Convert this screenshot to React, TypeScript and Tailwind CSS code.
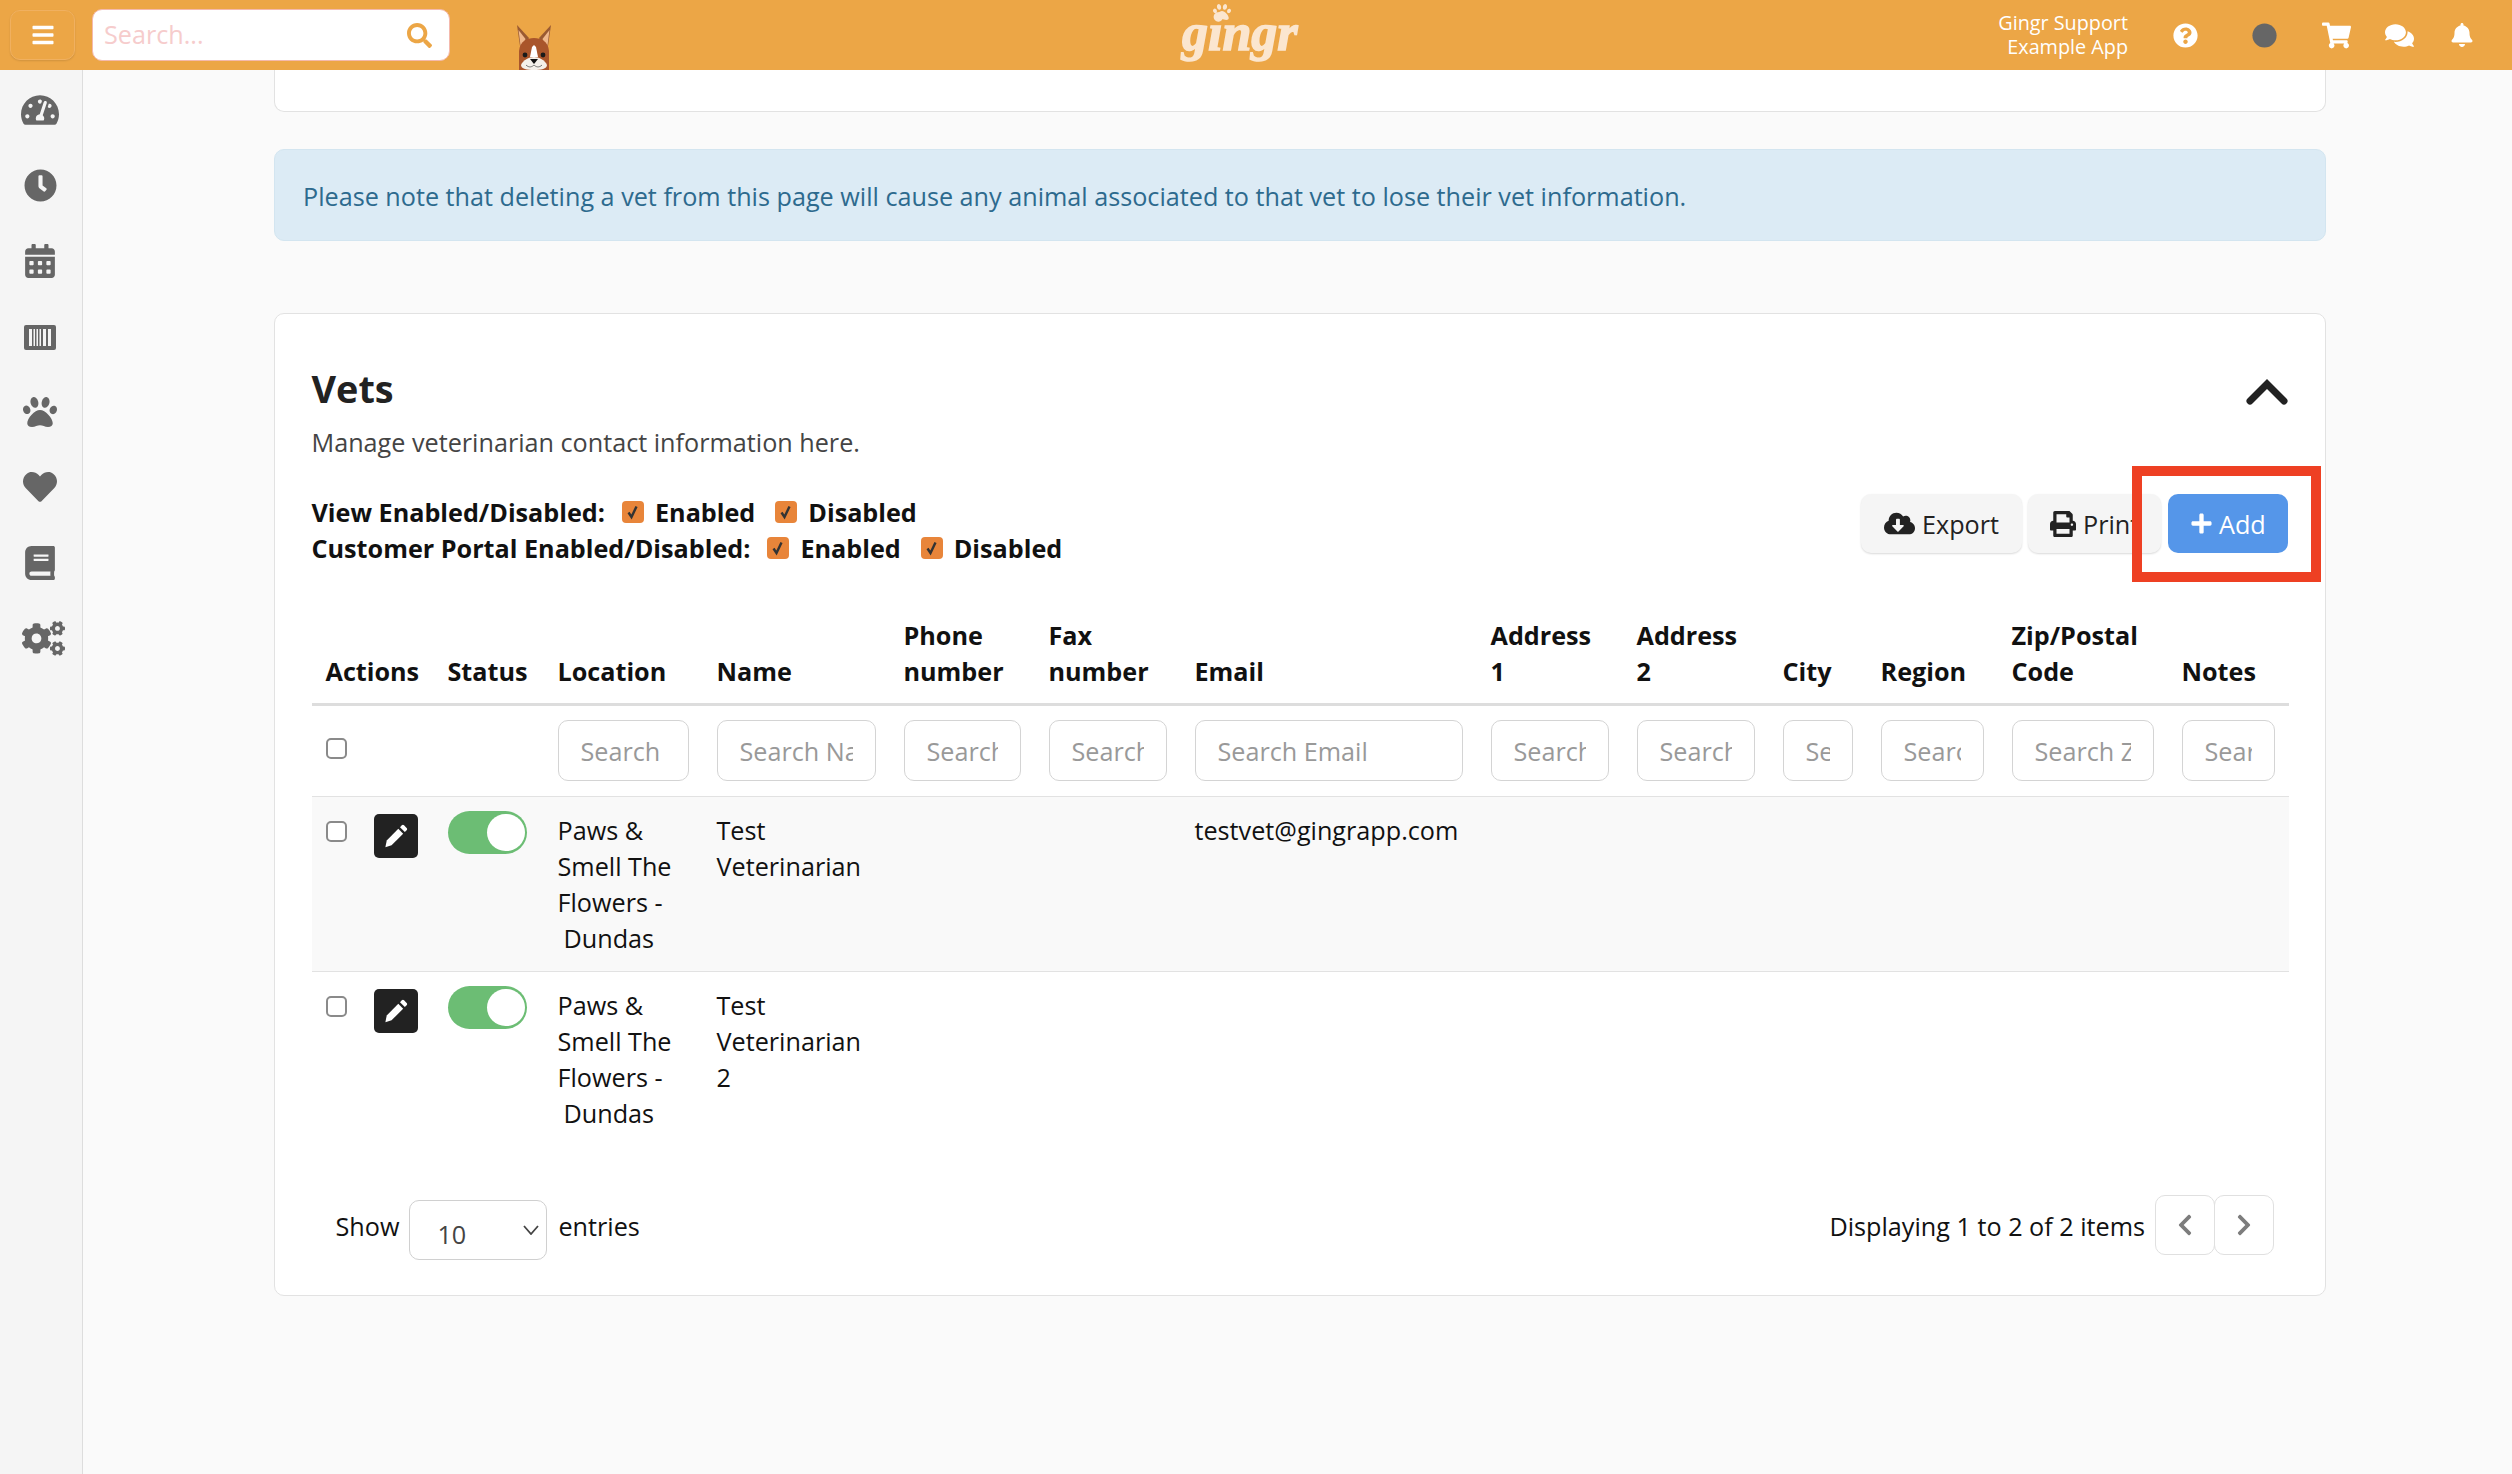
import {
  FaBars,
  FaBell,
  FaBook,
  FaCalendarAlt,
  FaChevronLeft,
  FaChevronRight,
  FaCircle,
  FaClock,
  FaCloudDownloadAlt,
  FaCogs,
  FaComments,
  FaHeart,
  FaPaw,
  FaPlus,
  FaPrint,
  FaQuestionCircle,
  FaSearch,
  FaShoppingCart,
  FaTachometerAlt,
} from "react-icons/fa"

const columns = [
  { label: "Actions", width: "w-[122px]" },
  { label: "Status", width: "w-[110px]" },
  { label: "Location", width: "w-[159px]", search: "Search Location" },
  { label: "Name", width: "w-[187px]", search: "Search Name" },
  { label: "Phone number", width: "w-[145px]", search: "Search Phone" },
  { label: "Fax number", width: "w-[146px]", search: "Search Fax" },
  { label: "Email", width: "w-[296px]", search: "Search Email" },
  { label: "Address 1", width: "w-[146px]", search: "Search Address" },
  { label: "Address 2", width: "w-[146px]", search: "Search Address" },
  { label: "City", width: "w-[98px]", search: "Search City" },
  { label: "Region", width: "w-[131px]", search: "Search Region" },
  { label: "Zip/Postal Code", width: "w-[170px]", search: "Search Zip" },
  { label: "Notes", width: "w-[121px]", search: "Search Notes" },
]

const rows = [
  { name: "Test Veterinarian", email: "testvet@gingrapp.com", striped: true },
  { name: "Test Veterinarian 2", email: "", striped: false },
]

function BarcodeIcon() {
  return (
    <svg width="32" height="25" viewBox="0 0 32 25" className="mt-[2px]">
      <rect width="32" height="25" rx="2" fill="#666" />
      <path d="M5 4h3v17H5zM9.5 4h1.500v17H9.500zM12.500 4h1.500v17h-1.500zM15.500 4h1.500v17h-1.500zM19 4h3v17h-3zM24 4h3v17h-3z" fill="#f5f5f5" />
    </svg>
  )
}

function PencilIcon() {
  return (
    <svg width="27" height="27" viewBox="0 0 24 24" fill="currentColor">
      <path d="M3 21.500 L4.200 15.500 L14.500 5.200 L18.800 9.500 L8.500 19.800 Z" />
      <path d="M16 3.700 L17.600 2.100 C18.200 1.500 19 1.500 19.600 2.100 L21.900 4.400 C22.500 5 22.500 5.800 21.900 6.400 L20.300 8 Z" />
    </svg>
  )
}

function DogHead() {
  return (
    <svg width="38" height="45" viewBox="0 0 38 45" className="self-end">
      <path d="M2 0 L14 13 L6 28 Z" fill="#9a5a32" />
      <path d="M36 0 L24 13 L32 28 Z" fill="#9a5a32" />
      <path d="M3.500 5 L10.500 14 L6 24 Z" fill="#efb88c" />
      <path d="M34.500 5 L27.500 14 L32 24 Z" fill="#efb88c" />
      <path d="M4 45 L4 26 C5 16 12 13 19 13 C26 13 33 16 34 26 L34 45 Z" fill="#a9552b" />
      <path d="M17 22 L19 20 L21 22 L23 32 L15 32 Z" fill="#fff" />
      <path d="M6 40 C8 35 14 32 19 32 C24 32 30 35 32 40 C32 44 26 45 19 45 C12 45 6 44 6 40 Z" fill="#f4f0ea" />
      <circle cx="10" cy="30" r="2.400" fill="#1a1a1a" />
      <circle cx="28" cy="30" r="2.400" fill="#1a1a1a" />
      <path d="M15 34 H23 L19 39 Z" fill="#111" />
      <path d="M11 40 C14 43 17 42 19 40 C21 42 24 43 27 40" fill="none" stroke="#555" strokeWidth="0.800" />
    </svg>
  )
}

function OrangeCheck({ label }: { label: string }) {
  return (
    <span className="flex items-center">
      <span className="flex h-[22px] w-[22px] items-center justify-center rounded-[4px] bg-[#e8853a]">
        <svg width="22" height="22" viewBox="0 0 22 22">
          <path d="M6.500 11.500 L9.500 16 L14.500 5.500" fill="none" stroke="#333" strokeWidth="2.400" />
        </svg>
      </span>
      <span className="ml-[11px]">{label}</span>
    </span>
  )
}

function RowCheckbox() {
  return <input type="checkbox" className="block h-[21px] w-[21px] appearance-none rounded-[5px] border-2 border-[#8a8a8a] bg-white" />
}

function Toggle() {
  return (
    <div className="flex h-[43px] w-[79px] items-center justify-end rounded-full bg-[#6cbd74] pr-[2px]">
      <div className="h-[37px] w-[38px] rounded-full bg-white" />
    </div>
  )
}

export default function App() {
  return (
    <div className="flex h-[1474px] w-[2512px] flex-col overflow-hidden bg-[#fafafa] font-['Open_Sans',sans-serif] text-[25.2px] leading-[36px] text-[#111]">
      <header className="flex h-[70px] shrink-0 items-center bg-[#eca646]">
        <button className="ml-[10px] flex h-[50px] w-[65px] items-center justify-center rounded-[10px] border border-[#f0b060] bg-[#eca646] text-white shadow-[0_1px_2px_rgba(0,0,0,0.12)]">
          <FaBars size={24} />
        </button>
        <div className="ml-[17px] flex h-[52px] w-[358px] items-center rounded-[10px] border border-[#f4b9ad] bg-white pl-[11px] pr-[17px]">
          <input placeholder="Search..." className="mb-[2px] w-full bg-transparent outline-none placeholder:text-[#f6cccc]" />
          <FaSearch size={25} className="shrink-0 text-[#eca646]" />
        </div>
        <div className="ml-[65px] flex h-full">
          <DogHead />
        </div>
        <div className="relative ml-[629px] h-full w-[118px] font-['Liberation_Serif',serif] text-[52px] font-bold italic leading-[66px] text-[#fbe6cf] [-webkit-text-stroke:1.5px_#fbe6cf]">
          <FaPaw size={18} className="absolute left-[31px] top-[3px]" />
          gingr
        </div>
        <div className="ml-auto text-right text-[19.8px] leading-[24px] text-white">
          <div>Gingr Support</div>
          <div>Example App</div>
        </div>
        <FaQuestionCircle size={25} className="ml-[45px] text-white" />
        <FaCircle size={25} className="ml-[54px] text-[#666]" />
        <FaShoppingCart size={29} className="ml-[45px] text-white" />
        <FaComments size={29} className="ml-[34px] text-white" />
        <FaBell size={24} className="ml-[36px] mr-[38px] text-white" />
      </header>

      <div className="flex min-h-0 flex-1">
        <aside className="flex w-[83px] shrink-0 flex-col items-center border-r border-[#ddd] bg-[#f5f5f5] pr-[2px] pt-[2px] text-[#666]">
          <div className="flex h-[75.5px] items-center"><FaTachometerAlt size={38} /></div>
          <div className="flex h-[75.5px] items-center"><FaClock size={33} /></div>
          <div className="flex h-[75.5px] items-center"><FaCalendarAlt size={34} /></div>
          <div className="flex h-[75.5px] items-center"><BarcodeIcon /></div>
          <div className="flex h-[75.5px] items-center"><FaPaw size={34} /></div>
          <div className="flex h-[75.5px] items-center"><FaHeart size={34} /></div>
          <div className="flex h-[75.5px] items-center"><FaBook size={34} /></div>
          <div className="flex h-[75.5px] items-center pl-[6px]"><FaCogs size={43} /></div>
        </aside>

        <main className="min-w-0 flex-1 pl-[191px] pr-[186px]">
          <div className="h-[42px] rounded-b-[10px] border border-t-0 border-[#e2e2e2] bg-white" />

          <div className="mt-[37px] flex h-[92px] items-center rounded-[10px] border border-[#d3e5f0] bg-[#dcebf5] px-[28px] pt-[1px] text-[#2d6a8e]">
            Please note that deleting a vet from this page will cause any animal associated to that vet to lose their vet information.
          </div>

          <section className="mt-[72px] rounded-[10px] border border-[#e2e2e2] bg-white pb-[35px] pl-[36.5px] pr-[37px] pt-[52px]">
            <div className="flex items-start justify-between">
              <div>
                <h1 className="text-[37.8px] font-bold leading-[46px] text-[#222]">Vets</h1>
                <p className="mt-[12px] text-[#444]">Manage veterinarian contact information here.</p>
              </div>
              <svg width="42" height="26" viewBox="0 0 42 26" className="mt-[13px]">
                <path d="M4 22 L21 5 L38 22" fill="none" stroke="#222" strokeWidth="7" strokeLinecap="round" />
              </svg>
            </div>

            <div className="mt-[34px] flex items-start justify-between">
              <div className="font-bold">
                <div className="flex items-center">
                  <span className="mr-[17px]">View Enabled/Disabled:</span>
                  <OrangeCheck label="Enabled" />
                  <span className="w-[20px]" />
                  <OrangeCheck label="Disabled" />
                </div>
                <div className="flex items-center">
                  <span className="mr-[17px]">Customer Portal Enabled/Disabled:</span>
                  <OrangeCheck label="Enabled" />
                  <span className="w-[20px]" />
                  <OrangeCheck label="Disabled" />
                </div>
              </div>

              <div className="flex text-[#222]">
                <button className="flex h-[59px] w-[161px] items-center rounded-[10px] bg-[#f5f5f5] pl-[23px] shadow-[0_1px_2px_rgba(0,0,0,0.15)]">
                  <FaCloudDownloadAlt size={31} className="mr-[7px]" />
                  Export
                </button>
                <button className="ml-[6px] flex h-[59px] w-[133px] items-center rounded-[10px] bg-[#f5f5f5] pl-[22px] shadow-[0_1px_2px_rgba(0,0,0,0.15)]">
                  <FaPrint size={26} className="mr-[7px]" />
                  Print
                </button>
                <div className="relative ml-[7px]">
                  <button className="flex h-[59px] w-[120px] items-center rounded-[10px] bg-[#5596e9] pl-[22px] text-white">
                    <FaPlus size={23} className="mr-[6px]" />
                    Add
                  </button>
                  <div className="pointer-events-none absolute -bottom-[29px] -left-[36px] -right-[33px] -top-[28px] border-[10px] border-[#ee4023]" />
                </div>
              </div>
            </div>

            <table className="mt-[51px] w-[1977px] table-fixed border-collapse">
              <colgroup>
                {columns.map((c) => (
                  <col key={c.label} className={c.width} />
                ))}
              </colgroup>
              <thead>
                <tr className="border-b-[3px] border-[#ddd]">
                  {columns.map((c) => (
                    <th key={c.label} className="px-[14px] pb-[14px] text-left align-bottom font-bold">
                      {c.label}
                    </th>
                  ))}
                </tr>
                <tr className="border-b border-[#e2e2e2]">
                  <th className="px-[14px] pt-[32px] text-left align-top">
                    <RowCheckbox />
                  </th>
                  <th />
                  {columns.slice(2).map((c) => (
                    <th key={c.label} className="px-[14px] pb-[15px] pt-[14px]">
                      <input
                        placeholder={c.search}
                        className="block h-[61px] w-full rounded-[10px] border border-[#d4d4d4] bg-white px-[22px] font-normal outline-none placeholder:text-[#999]"
                      />
                    </th>
                  ))}
                </tr>
              </thead>
              <tbody>
                {rows.map((row) => (
                  <tr key={row.name} className={row.striped ? "border-b border-[#e2e2e2] bg-[#f9f9f9]" : ""}>
                    <td className="px-[14px] pb-[15px] pt-[15px] align-top">
                      <div className="flex items-start">
                        <div className="mt-[9px]">
                          <RowCheckbox />
                        </div>
                        <button className="ml-[27px] mt-[2px] flex h-[44px] w-[44px] shrink-0 items-center justify-center rounded-[5px] bg-[#222] text-white">
                          <PencilIcon />
                        </button>
                      </div>
                    </td>
                    <td className="px-[14px] pb-[15px] pt-[14px] align-top">
                      <Toggle />
                    </td>
                    <td className="px-[14px] pb-[15px] pt-[15px] align-top">
                      Paws &amp; Smell The Flowers -<br />
                      <span className="ml-[6px]">Dundas</span>
                    </td>
                    <td className="px-[14px] pb-[15px] pt-[15px] align-top">{row.name}</td>
                    <td />
                    <td />
                    <td className="overflow-visible whitespace-nowrap px-[14px] pb-[15px] pt-[15px] align-top">{row.email}</td>
                    <td />
                    <td />
                    <td />
                    <td />
                    <td />
                    <td />
                  </tr>
                ))}
              </tbody>
            </table>

            <div className="mt-[49px] flex items-start justify-between">
              <div className="ml-[24px] mt-[5px] flex items-start">
                <span className="mt-[8px]">Show</span>
                <div className="ml-[10px] flex h-[60px] w-[138px] items-center justify-between rounded-[10px] border border-[#d0d0d0] bg-white pl-[27px] pr-[7px] pt-[8px] text-[#444]">
                  10
                  <svg width="16" height="10" viewBox="0 0 16 10" className="-mt-[8px]">
                    <path d="M1 1 L8 9 L15 1" fill="none" stroke="#444" strokeWidth="1.800" />
                  </svg>
                </div>
                <span className="ml-[11px] mt-[8px]">entries</span>
              </div>
              <div className="mr-[14px] flex items-start">
                <span className="mr-[10px] mt-[13px]">Displaying 1 to 2 of 2 items</span>
                <button className="flex h-[60px] w-[60px] items-center justify-center rounded-[10px] border border-[#e0e0e0] bg-white text-[#7d7d7d]">
                  <FaChevronLeft size={24} />
                </button>
                <button className="-ml-[1px] flex h-[60px] w-[60px] items-center justify-center rounded-[10px] border border-[#e0e0e0] bg-white text-[#7d7d7d]">
                  <FaChevronRight size={24} />
                </button>
              </div>
            </div>
          </section>
        </main>
      </div>
    </div>
  )
}
